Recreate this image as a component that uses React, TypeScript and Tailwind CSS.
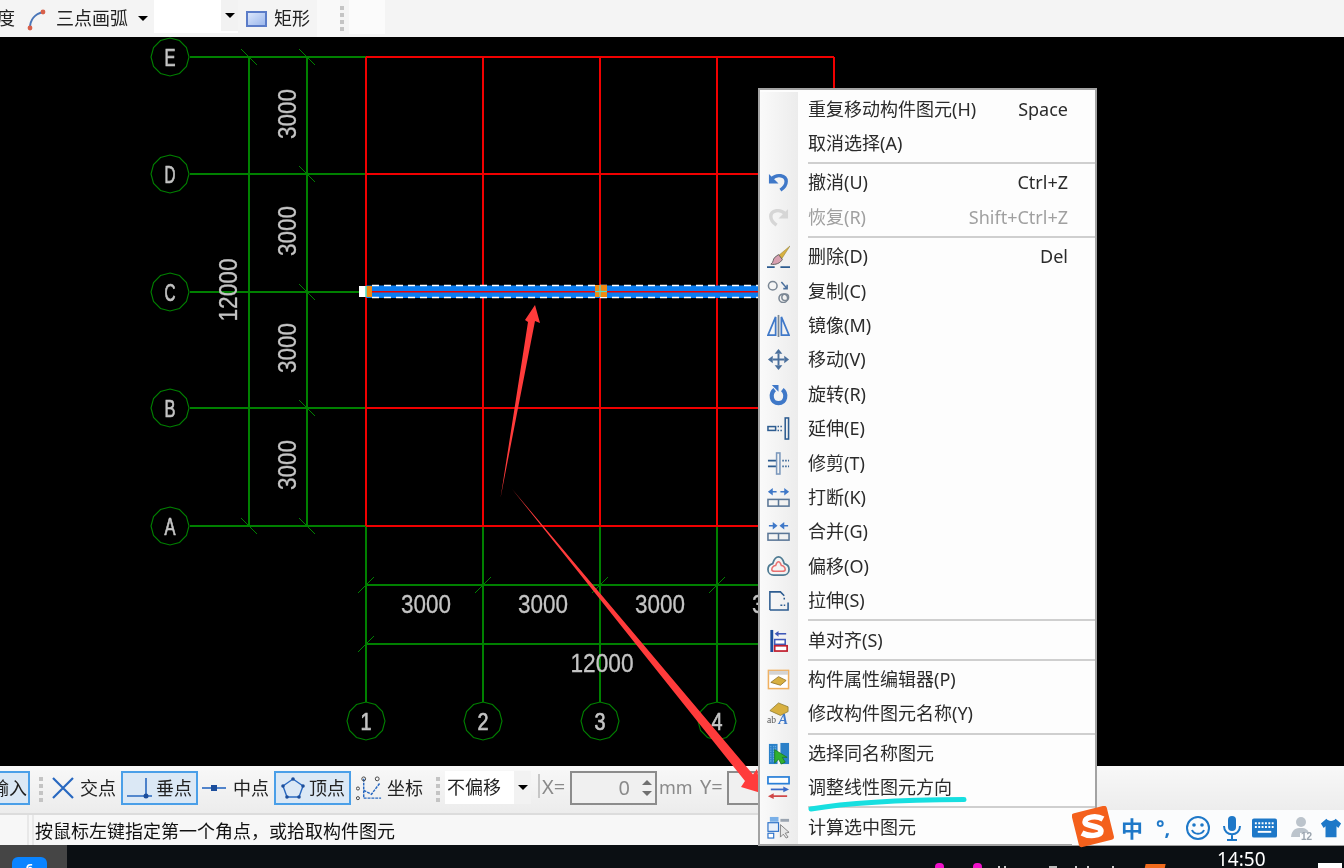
import type { ReactNode } from 'react'

const font = { fontFamily: '"Noto Sans", "Noto Sans CJK SC", sans-serif' }

const GREEN = '#008000'
const RED = '#f00000'
const TEXT = '#c4c4c4'
const colX = [366, 483, 600, 717, 834]
const rowY = [57, 174, 292, 408, 526]

function polygonPoints(cx: number, cy: number, r: number, sides: number) {
  const pts: string[] = []
  for (let i = 0; i < sides; i++) {
    const a = (Math.PI * 2 * i) / sides - Math.PI / 2
    pts.push(`${cx + r * Math.cos(a)},${cy + r * Math.sin(a)}`)
  }
  return pts.join(' ')
}

function Axis({ x, y, label }: { x: number; y: number; label: string }) {
  return (
    <g>
      <polygon points={polygonPoints(x, y, 19, 12)} fill="none" stroke={GREEN} strokeWidth="1.1" />
      <text
        x={x}
        y={y + 9}
        textAnchor="middle"
        fontSize="24"
        fill={TEXT}
        stroke={TEXT}
        strokeWidth="0.7"
        fontFamily="Liberation Sans, sans-serif"
        textLength="11"
        lengthAdjust="spacingAndGlyphs"
      >
        {label}
      </text>
    </g>
  )
}

function Dim({ x, y, text, rotate }: { x: number; y: number; text: string; rotate?: boolean }) {
  return (
    <text
      x={x}
      y={y}
      textAnchor="middle"
      fontSize="25"
      fill={TEXT}
      stroke={TEXT}
      strokeWidth="0.3"
      fontFamily="Liberation Sans, sans-serif"
      dominantBaseline="central"
      textLength={text.length === 4 ? 50 : 63}
      lengthAdjust="spacingAndGlyphs"
      transform={rotate ? `rotate(-90 ${x} ${y})` : undefined}
    >
      {text}
    </text>
  )
}

function Drawing() {
  return (
    <svg viewBox="0 37 1344 729" className="block h-[729px] w-[1344px] bg-black">
      <g stroke={GREEN} strokeWidth="2">
        {rowY.map((y) => (
          <line key={y} x1="190" y1={y} x2="366" y2={y} />
        ))}
        <line x1="249" y1="57" x2="249" y2="526" />
        <line x1="307" y1="57" x2="307" y2="526" />
        {colX.map((x) => (
          <line key={x} x1={x} y1="526" x2={x} y2="702" />
        ))}
        <line x1="366" y1="585" x2="834" y2="585" />
        <line x1="366" y1="644" x2="834" y2="644" />
        {[57, 526].map((y) => (
          <line key={y} x1="241" y1={y - 8} x2="257" y2={y + 8} strokeWidth="1" />
        ))}
        {rowY.map((y) => (
          <line key={y} x1="299" y1={y - 8} x2="315" y2={y + 8} strokeWidth="1" />
        ))}
        {colX.map((x) => (
          <line key={x} x1={x - 8} y1="593" x2={x + 8} y2="577" strokeWidth="1" />
        ))}
        <line x1="358" y1="652" x2="374" y2="636" strokeWidth="1" />
      </g>
      <g stroke={RED} strokeWidth="2">
        {rowY.map((y) => (
          <line key={y} x1="366" y1={y} x2="834" y2={y} />
        ))}
        {colX.map((x) => (
          <line key={x} x1={x} y1="57" x2={x} y2="526" />
        ))}
      </g>

      <rect x="366" y="285.5" width="394" height="12.5" fill="#0a7cf0" />
      <line x1="366" y1="291.8" x2="760" y2="291.8" stroke={RED} strokeWidth="1.6" />
      <line x1="372" y1="285.5" x2="760" y2="285.5" stroke="#fff" strokeWidth="1.4" strokeDasharray="7 5" />
      <line x1="372" y1="297.5" x2="760" y2="297.5" stroke="#fff" strokeWidth="1.4" strokeDasharray="7 5" />
      <rect x="359" y="286" width="7" height="11" fill="#fff" />
      <rect x="366" y="286" width="6" height="11" fill="#f08a12" />
      <line x1="366" y1="286" x2="366" y2="297" stroke="#53e0c8" strokeWidth="1.6" />
      <rect x="595" y="285" width="12" height="12" fill="#f08a12" />
      <line x1="600" y1="285" x2="600" y2="297" stroke="#53e0c8" strokeWidth="1.2" />
      <line x1="595" y1="291.5" x2="607" y2="291.5" stroke="#53e0c8" strokeWidth="1.2" />

      {['E', 'D', 'C', 'B', 'A'].map((l, i) => (
        <Axis key={l} x={170} y={rowY[i]} label={l} />
      ))}
      {['1', '2', '3', '4'].map((l, i) => (
        <Axis key={l} x={colX[i]} y={721} label={l} />
      ))}

      {[114, 231, 348, 465].map((y) => (
        <Dim key={y} x={287} y={y} text="3000" rotate />
      ))}
      <Dim x={228} y={290} text="12000" rotate />
      {[426, 543, 660, 777].map((x) => (
        <Dim key={x} x={x} y={604} text="3000" />
      ))}
      <Dim x={602} y={663} text="12000" />
    </svg>
  )
}

function Caret() {
  return <span className="h-0 w-0 border-x-[5px] border-t-[5px] border-x-transparent border-t-black" />
}

function Grip() {
  return (
    <span className="flex w-[6px] flex-col gap-[3px]">
      <span className="h-[4px] w-[4px] bg-[#c4c4c4]" />
      <span className="h-[4px] w-[4px] bg-[#c4c4c4]" />
      <span className="h-[4px] w-[4px] bg-[#c4c4c4]" />
      <span className="h-[4px] w-[4px] bg-[#c4c4c4]" />
    </span>
  )
}

function TopBar() {
  return (
    <div className="flex h-[37px] items-center overflow-hidden bg-[#f4f4f4] text-[18px] text-[#222]">
      <span className="w-[27px] shrink-0 -translate-x-[3px]">度</span>
      <svg viewBox="0 0 20 24" className="h-[24px] w-[20px] shrink-0">
        <path d="M3 21C3 13 8 7 16 5" fill="none" stroke="#4a76b8" strokeWidth="2" />
        <circle cx="3" cy="21" r="2.4" fill="#d8604a" />
        <circle cx="16" cy="5" r="2.4" fill="#d8604a" />
      </svg>
      <span className="ml-[9px] w-[82px] shrink-0">三点画弧</span>
      <Caret />
      <div className="ml-[6px] flex h-[33px] w-[84px] shrink-0 self-start bg-white">
        <span className="ml-auto flex h-[31px] w-[17px] items-center justify-center bg-[#f2f2f2]">
          <Caret />
        </span>
      </div>
      <span className="ml-[8px] h-[16px] w-[21px] shrink-0 border-2 border-[#5b7cc8] bg-linear-to-br from-[#dbe6fb] to-[#9db8ec]" />
      <span className="ml-[7px] shrink-0">矩形</span>
      <span className="ml-[7px] h-full w-[23px] shrink-0 bg-[#f9f9f9]" />
      <Grip />
      <span className="ml-[3px] h-[34px] w-[36px] shrink-0 self-start bg-[#fbfbfb]" />
    </div>
  )
}

function ToolItem({ icon, label, active, className }: { icon: ReactNode; label: string; active?: boolean; className: string }) {
  return (
    <div
      className={`flex h-[34px] shrink-0 items-center ${active ? 'border-2 border-[#4a9fe8] bg-[#dbe8f5]' : ''} ${className}`}
    >
      {icon}
      <span className="ml-auto pr-[4px] text-[18px] leading-none text-[#222]">{label}</span>
    </div>
  )
}

function BottomBar() {
  return (
    <div className="flex h-[47px] items-start overflow-hidden bg-linear-to-b from-[#f8f8f8] to-[#ececec] pt-[5px] text-[18px]">
      <div className="flex h-[34px] w-[30px] shrink-0 items-center justify-end overflow-hidden border-2 border-l-0 border-[#4a9fe8] bg-[#dbe8f5] pr-[1px] text-[#222]">
        <span className="shrink-0 leading-none">输入</span>
      </div>
      <span className="ml-[9px] self-center -translate-y-[3px]">
        <Grip />
      </span>
      <ToolItem
        className="ml-[5px] w-[70px] pl-[1px]"
        label="交点"
        icon={
          <svg viewBox="0 0 24 24" className="h-[24px] w-[24px]">
            <path d="M2 2L22 22M22 2L2 22" stroke="#2868c0" strokeWidth="2.2" />
          </svg>
        }
      />
      <ToolItem
        active
        className="ml-[1px] w-[77px] pl-[3px]"
        label="垂点"
        icon={
          <svg viewBox="0 0 28 24" className="h-[24px] w-[28px]">
            <path d="M1 20H26M20 2V22" stroke="#2868c0" strokeWidth="1.6" />
            <circle cx="20" cy="20" r="2.5" fill="#1c4e9c" />
          </svg>
        }
      />
      <ToolItem
        className="ml-[4px] w-[71px]"
        label="中点"
        icon={
          <svg viewBox="0 0 24 24" className="h-[24px] w-[24px]">
            <path d="M0 12H24" stroke="#2868c0" strokeWidth="1.6" />
            <rect x="9" y="9" width="6" height="6" fill="#1c4e9c" />
          </svg>
        }
      />
      <ToolItem
        active
        className="ml-[1px] w-[77px] pl-[5px]"
        label="顶点"
        icon={
          <svg viewBox="0 0 24 24" className="h-[24px] w-[24px]">
            <path d="M12 3L22 10L18 21H6L2 10Z" fill="none" stroke="#2868c0" strokeWidth="1.4" />
            <circle cx="12" cy="3" r="1.8" fill="#1c4e9c" />
            <circle cx="22" cy="10" r="1.8" fill="#1c4e9c" />
            <circle cx="18" cy="21" r="1.8" fill="#1c4e9c" />
            <circle cx="6" cy="21" r="1.8" fill="#1c4e9c" />
            <circle cx="2" cy="10" r="1.8" fill="#1c4e9c" />
          </svg>
        }
      />
      <ToolItem
        className="ml-[5px] w-[71px]"
        label="坐标"
        icon={
          <svg viewBox="0 0 28 28" className="h-[27px] w-[27px]">
            <path d="M8 4V24H26M8 16L16 20L25 8" fill="none" stroke="#2868c0" strokeWidth="1.5" strokeDasharray="3 1" />
            <circle cx="8" cy="4" r="2" fill="none" stroke="#444" />
            <circle cx="2" cy="14" r="1.6" fill="none" stroke="#444" />
            <circle cx="22" cy="4" r="2" fill="none" stroke="#444" />
            <circle cx="2" cy="24" r="1.6" fill="none" stroke="#444" />
          </svg>
        }
      />
      <span className="ml-[9px] self-center -translate-y-[3px]">
        <Grip />
      </span>
      <div className="ml-[3px] flex h-[33px] w-[86px] shrink-0 items-center bg-white pl-[2px] text-[#222]">
        <span>不偏移</span>
        <span className="ml-auto flex h-full w-[17px] items-center justify-center bg-[#f2f2f2]">
          <Caret />
        </span>
      </div>
      <span className="ml-[7px] mt-[3px] h-[24px] w-[2px] shrink-0 bg-[#c6c6c6]" />
      <span className="ml-[2px] w-[28px] shrink-0 text-[20px] leading-[32px] text-[#8a8a8a]">X=</span>
      <div className="flex h-[34px] w-[87px] shrink-0 items-center justify-end border-2 border-[#8c8c8c] bg-[#f0f0f0] text-[20px] text-[#8a8a8a]">
        <span className="mr-[9px]">0</span>
        <span className="flex h-full w-[16px] flex-col items-center justify-around py-[4px]">
          <span className="h-0 w-0 border-x-[5px] border-b-[5px] border-x-transparent border-b-[#707070]" />
          <span className="h-0 w-0 border-x-[5px] border-t-[5px] border-x-transparent border-t-[#707070]" />
        </span>
      </div>
      <span className="ml-[2px] w-[41px] shrink-0 leading-[32px] text-[#8a8a8a]">mm</span>
      <span className="w-[27px] shrink-0 text-[20px] leading-[32px] text-[#8a8a8a]">Y=</span>
      <div className="h-[34px] w-[87px] shrink-0 border-2 border-[#8c8c8c] bg-[#f0f0f0]" />
    </div>
  )
}

function StatusBar() {
  return (
    <div className="flex h-[32px] border-t-2 border-[#dcdcdc] bg-[#f7f7f7]">
      <span className="w-[29px] shrink-0 border-r-2 border-[#e8e8e8]" />
      <span className="ml-[3px] border-l-2 border-[#e8e8e8] pl-[1px] text-[18px] leading-[33px] text-[#111]">
        按鼠标左键指定第一个角点，或拾取构件图元
      </span>
    </div>
  )
}

function Taskbar() {
  return (
    <div className="flex h-[23px] overflow-hidden bg-[#0b0f13]">
      <div className="flex w-[67px] shrink-0 items-start bg-[#454545] pl-[12px] pt-[12px]">
        <span className="flex h-[14px] w-[35px] justify-center rounded-t-[6px] bg-[#0a84ff] pt-[4px] text-[13px] leading-[14px] font-bold text-white">
          6
        </span>
      </div>
      <span className="ml-[868px] mt-[18px] h-[8px] w-[9px] rounded-full bg-[#f010c8]" />
      <span className="ml-[29px] mt-[18px] h-[8px] w-[9px] rounded-full bg-[#f010c8]" />
      <span className="ml-[16px] mt-[21px] h-[4px] w-[2px] bg-[#cccccc]" />
      <span className="ml-[4px] mt-[21px] h-[4px] w-[2px] bg-[#cccccc]" />
      <span className="ml-[43px] mt-[21px] h-[3px] w-[8px] bg-[#bbbbbb]" />
      <span className="ml-[18px] mt-[21px] h-[4px] w-[2px] bg-[#cccccc]" />
      <span className="ml-[10px] mt-[21px] h-[4px] w-[2px] bg-[#cccccc]" />
      <span className="ml-[23px] mt-[21px] h-[4px] w-[2px] bg-[#cccccc]" />
      <span className="ml-[31px] mt-[19px] h-[6px] w-[20px] -skew-x-12 bg-[#f06a1c]" />
      <span className="ml-[52px] mt-[2px] text-[19px] leading-[24px] text-white">14:50</span>
      <span className="ml-[52px] mt-[18px] h-[6px] w-[24px] bg-white" />
    </div>
  )
}

const iconBlue = '#3f78c8'
const slate = '#4a6f9c'

const icons: Record<string, ReactNode> = {
  undo: (
    <g>
      <path d="M5 8C10 3 20 4 20 11C20 15 17 18 14 20" fill="none" stroke={iconBlue} strokeWidth="3.6" />
      <path d="M2 3V13H12Z" fill={iconBlue} />
    </g>
  ),
  redo: (
    <g>
      <path d="M19 8C14 3 4 4 4 11C4 15 7 18 10 20" fill="none" stroke="#d6d6d6" strokeWidth="3.6" />
      <path d="M22 3V13H12Z" fill="#d6d6d6" />
    </g>
  ),
  brush: (
    <g>
      <path d="M24 1L12 11L15 15Z" fill="#d8b040" stroke="#8a7a30" strokeWidth="0.5" />
      <path d="M12 10L8 13C6 15 7 18 4 20C9 21 14 19 16 15Z" fill="#d8a0b0" stroke="#555" strokeWidth="0.9" />
      <path d="M0 23H8M14 23H24" stroke="#2d5c90" strokeWidth="1.8" />
    </g>
  ),
  copy: (
    <g fill="none" stroke="#7b8794" strokeWidth="1.6">
      <circle cx="6" cy="6" r="4.5" />
      <circle cx="17" cy="19" r="4.5" />
      <circle cx="19" cy="18" r="3.5" />
      <path d="M15 2L21 9M21 5V9H17" stroke={slate} />
    </g>
  ),
  mirror: (
    <g fill="none" stroke={iconBlue} strokeWidth="1.8">
      <path d="M9 3V22H1Z" />
      <path d="M15 3V22H23Z" />
      <path d="M12 1V24" stroke="#7b8794" />
    </g>
  ),
  move: (
    <g fill={slate}>
      <path d="M11 6H13V18H11ZM6 11H18V13H6Z" />
      <path d="M12 1L16 6H8ZM12 23L16 18H8ZM1 12L6 8V16ZM23 12L18 8V16Z" />
    </g>
  ),
  rotate: (
    <g fill="none">
      <path d="M8 7C3 11 4 21 12 21C20 21 21 11 16 7" stroke={iconBlue} strokeWidth="4.4" />
      <path d="M5 2H12V9Z" fill={iconBlue} />
    </g>
  ),
  extend: (
    <g fill="none" stroke="#2d5c90" strokeWidth="1.6">
      <rect x="1" y="10" width="8" height="4" />
      <path d="M11 10H16M11 14H16" strokeDasharray="1.5 1.5" />
      <rect x="19" y="1" width="3.5" height="22" />
    </g>
  ),
  trim: (
    <g fill="none" stroke="#2d5c90" strokeWidth="1.6">
      <path d="M1 9H10M1 15H10" />
      <rect x="10" y="1" width="3.5" height="22" stroke="#7b98bc" />
      <path d="M16 9H23M16 15H23" strokeDasharray="1.5 1.5" />
    </g>
  ),
  split: (
    <g>
      <path d="M10 6H2M14 6H22" stroke={iconBlue} strokeWidth="1.8" />
      <path d="M1 6L6 2V10ZM23 6L18 2V10Z" fill={iconBlue} />
      <rect x="1" y="14" width="22" height="7" fill="none" stroke="#5a7696" strokeWidth="1.6" />
      <path d="M12 14V21" stroke="#5a7696" strokeWidth="1.6" />
    </g>
  ),
  merge: (
    <g>
      <path d="M2 6H9M15 6H22" stroke={iconBlue} strokeWidth="1.8" />
      <path d="M11 6L6 2V10ZM13 6L18 2V10Z" fill={iconBlue} />
      <rect x="1" y="14" width="22" height="7" fill="none" stroke="#5a7696" strokeWidth="1.6" />
      <path d="M12 14V21" stroke="#5a7696" strokeWidth="1.6" />
    </g>
  ),
  offset: (
    <g fill="none">
      <path d="M12 2C8 2 7 6 6 9C2 10 1 13 1 15C1 19 4 21 7 21H17C20 21 23 19 23 15C23 13 22 10 18 9C17 6 16 2 12 2Z" stroke="#4d7a92" strokeWidth="1.8" />
      <path d="M12 7C10 7 9.5 10 9 11C7 11 5 13 5 15C5 16 6 17 8 17H16C18 17 19 16 19 15C19 13 17 11 15 11C14.5 10 14 7 12 7Z" stroke="#e87070" strokeWidth="1.6" />
    </g>
  ),
  stretch: (
    <g fill="none" stroke="#2d5c90" strokeWidth="1.6">
      <path d="M3 22V3H14L18 7" />
      <path d="M3 22H22V14" />
      <path d="M14 17H19M18 9V12" strokeDasharray="2 1.5" />
    </g>
  ),
  align: (
    <g>
      <path d="M5 1V24" stroke="#1c4e9c" strokeWidth="3" />
      <rect x="8" y="11" width="11" height="5" fill="#fff" stroke="#3f58b8" strokeWidth="1.6" />
      <rect x="8" y="17.5" width="13" height="5.5" fill="#fff" stroke="#c02030" strokeWidth="1.8" />
      <path d="M20 5H10" stroke="#3f58b8" strokeWidth="1.6" />
      <path d="M8 5L12 2V8Z" fill="#3f58b8" />
    </g>
  ),
  props: (
    <g>
      <rect x="1.5" y="2.5" width="21" height="19" fill="#fff" stroke="#f0b060" strokeWidth="1.6" />
      <rect x="2" y="3" width="20" height="4" fill="#d4d4d4" />
      <path d="M4 15L12 9L20 13L14 18Z" fill="#d8b040" stroke="#8a6a20" strokeWidth="0.8" />
    </g>
  ),
  rename: (
    <g>
      <path d="M3 9L12 1L22 5V10L14 14Z" fill="#d8b040" stroke="#8a7a30" strokeWidth="0.8" />
      <text x="0" y="22" fontSize="10" fontFamily="Liberation Serif, serif" fill="#555">ab</text>
      <text x="12" y="23" fontSize="15" fontStyle="italic" fontWeight="700" fontFamily="Liberation Serif, serif" fill="#3f78c8">A</text>
    </g>
  ),
  same: (
    <g>
      <rect x="2" y="2" width="9" height="21" fill="#2a80c8" />
      <rect x="14" y="1" width="9" height="22" fill="#2a80c8" />
      <path d="M4 4V21M7 4V21M9 4V21" stroke="#8ac4ec" strokeWidth="0.8" strokeDasharray="1.5 1" />
      <path d="M8 8L8 22L12 18L15 23L19 21L16 16L21 16Z" fill="#30b030" stroke="#1a7a1a" strokeWidth="0.8" />
    </g>
  ),
  direction: (
    <g fill="none">
      <rect x="1" y="1" width="22" height="7" fill="#fff" stroke="#2a80d8" strokeWidth="1.8" />
      <path d="M4 14H20" stroke="#3a6ac8" strokeWidth="1.8" />
      <path d="M23 14L17 11V17Z" fill="#3a6ac8" />
      <path d="M4 21H21" stroke="#d04848" strokeWidth="1.8" />
      <path d="M1 21L7 18V24Z" fill="#d04848" />
    </g>
  ),
  calc: (
    <g>
      <rect x="3" y="1" width="9" height="5" fill="#7ab0e8" />
      <rect x="1" y="7" width="11" height="9" fill="#e8f0fa" stroke="#2a70c8" strokeWidth="1.2" />
      <rect x="1" y="18" width="6" height="5" fill="#fff" stroke="#2a70c8" strokeWidth="1.2" />
      <rect x="14" y="3" width="9" height="3" fill="#9aa4b0" />
      <path d="M14 9L14 22L17 19L20 23L22 22L19 18L23 17Z" fill="#e8e8e8" stroke="#777" strokeWidth="0.9" />
    </g>
  ),
}

type Entry = { icon?: string; label: string; key?: string; off?: boolean } | 'sep'

const entries: Entry[] = [
  { label: '重复移动构件图元(H)', key: 'Space' },
  { label: '取消选择(A)' },
  'sep',
  { icon: 'undo', label: '撤消(U)', key: 'Ctrl+Z' },
  { icon: 'redo', label: '恢复(R)', key: 'Shift+Ctrl+Z', off: true },
  'sep',
  { icon: 'brush', label: '删除(D)', key: 'Del' },
  { icon: 'copy', label: '复制(C)' },
  { icon: 'mirror', label: '镜像(M)' },
  { icon: 'move', label: '移动(V)' },
  { icon: 'rotate', label: '旋转(R)' },
  { icon: 'extend', label: '延伸(E)' },
  { icon: 'trim', label: '修剪(T)' },
  { icon: 'split', label: '打断(K)' },
  { icon: 'merge', label: '合并(G)' },
  { icon: 'offset', label: '偏移(O)' },
  { icon: 'stretch', label: '拉伸(S)' },
  'sep',
  { icon: 'align', label: '单对齐(S)' },
  'sep',
  { icon: 'props', label: '构件属性编辑器(P)' },
  { icon: 'rename', label: '修改构件图元名称(Y)' },
  'sep',
  { icon: 'same', label: '选择同名称图元' },
  { icon: 'direction', label: '调整线性图元方向' },
  'sep',
  { icon: 'calc', label: '计算选中图元' },
]

function ContextMenu() {
  return (
    <div className="absolute top-[88px] left-[758px] flex h-[758px] w-[339px] flex-col border-2 border-[#a3a3a3] bg-[#fdfdfd] pt-[2px]">
      {entries.map((entry, index) =>
        entry === 'sep' ? (
          <div key={index} className="flex h-[5px] shrink-0 items-center">
            <span className="h-full w-[38px] shrink-0 bg-linear-to-r from-[#fafafa] to-[#ececec]" />
            <span className="ml-[10px] h-[2px] flex-1 bg-[#cfcfcf]" />
          </div>
        ) : (
          <div key={index} className="flex h-[34.4px] shrink-0 items-center">
            <span className="flex h-full w-[38px] shrink-0 items-center justify-center bg-linear-to-r from-[#fafafa] to-[#ececec]">
              {entry.icon && (
                <svg viewBox="0 0 24 24" className="h-[23px] w-[23px] -translate-x-[1px]">
                  {icons[entry.icon]}
                </svg>
              )}
            </span>
            <span className={`ml-[10px] text-[18px] ${entry.off ? 'text-[#a0a0a0]' : 'text-[#2b2b2b]'}`}>{entry.label}</span>
            {entry.key && (
              <span className={`mr-[27px] ml-auto text-[18px] ${entry.off ? 'text-[#a0a0a0]' : 'text-[#2b2b2b]'}`}>{entry.key}</span>
            )}
          </div>
        ),
      )}
    </div>
  )
}

function ImeBar() {
  const blue = '#1e78c8'
  return (
    <div className="absolute top-[810px] left-[1072px] flex h-[36px] w-[272px] items-center border-b border-[#a0a0a0] bg-[#fbfcfd]">
      <svg viewBox="0 0 42 42" className="-mt-[2px] h-[42px] w-[42px] shrink-0">
        <rect x="3" y="3" width="36" height="35" rx="3" fill="#f4601c" transform="rotate(-14 21 21)" />
        <path d="M31 13C24 9 13 11 13 16C13 21 29 19 29 25C29 30 17 31 10 27" fill="none" stroke="#fff" strokeWidth="5.5" />
      </svg>
      <span className="ml-[7px] text-[22px] leading-none font-bold text-[#1e78c8]">中</span>
      <span className="ml-[13px] text-[20px] leading-none font-bold text-[#1e78c8]">°,</span>
      <svg viewBox="0 0 26 26" className="ml-[15px] h-[26px] w-[26px] shrink-0">
        <circle cx="13" cy="13" r="11" fill="none" stroke={blue} strokeWidth="2" />
        <circle cx="9" cy="10" r="1.8" fill={blue} />
        <circle cx="17" cy="10" r="1.8" fill={blue} />
        <path d="M7 15C9 20 17 20 19 15" fill="none" stroke={blue} strokeWidth="2" />
      </svg>
      <svg viewBox="0 0 20 26" className="ml-[11px] h-[26px] w-[20px] shrink-0">
        <rect x="6" y="1" width="8" height="15" rx="4" fill={blue} />
        <path d="M2 11C2 22 18 22 18 11M10 20V25M5 25H15" fill="none" stroke={blue} strokeWidth="2" />
      </svg>
      <svg viewBox="0 0 26 20" className="ml-[10px] h-[20px] w-[25px] shrink-0">
        <rect width="26" height="20" rx="2" fill={blue} />
        <path d="M3 5H23M3 9H23" stroke="#fff" strokeWidth="2" strokeDasharray="2 1.5" />
        <path d="M6 14H20" stroke="#fff" strokeWidth="2" />
      </svg>
      <svg viewBox="0 0 26 26" className="ml-[13px] h-[26px] w-[26px] shrink-0">
        <circle cx="11" cy="7" r="5" fill="#bcc4cc" />
        <path d="M1 22C2 14 6 13 11 13C16 13 18 15 19 18H10V22Z" fill="#bcc4cc" />
        <text x="11" y="25" fontSize="10" fontWeight="700" fontFamily="Liberation Sans, sans-serif" fill="#9aa4ae">12</text>
      </svg>
      <svg viewBox="0 0 24 22" className="ml-[4px] h-[22px] w-[22px] shrink-0">
        <path d="M7 1L1 6L4 11L6 9V21H18V9L20 11L23 6L17 1C15 4 9 4 7 1Z" fill={blue} />
      </svg>
    </div>
  )
}

export default function App() {
  return (
    <div className="relative flex h-[868px] w-[1344px] flex-col overflow-hidden blur-[0.5px]" style={font}>
      <TopBar />
      <Drawing />
      <BottomBar />
      <StatusBar />
      <Taskbar />

      <svg viewBox="0 0 1344 868" className="pointer-events-none absolute inset-0">
        <path d="M500.5 498L528 322L525 320L535 305L540 323L535 321Z" fill="#ff3b3b" />
        <path d="M512 489L753 774.5L757 769L761 793L741 787L745 781Z" fill="#ff3b3b" />
      </svg>

      <ContextMenu />

      <svg viewBox="0 0 1344 868" className="pointer-events-none absolute inset-0">
        <path d="M811 809C840 804 880 800 964 799.5" fill="none" stroke="#17dfe0" strokeWidth="5" strokeLinecap="round" />
      </svg>

      <ImeBar />
    </div>
  )
}
